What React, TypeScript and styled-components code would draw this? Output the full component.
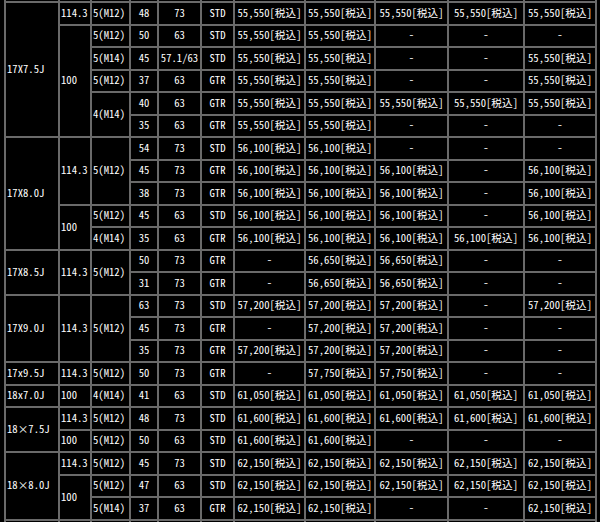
import React from 'react';
import styled, { createGlobalStyle } from 'styled-components';

const GlobalStyle = createGlobalStyle`
  html, body {
    margin: 0;
    padding: 0;
    background: #000;
    overflow: hidden;
  }
`;

const LINE = '#6a6a6a';

const Viewport = styled.div`
  height: 522px;
  overflow: hidden;
  padding-left: 4px;
  background: #000;
`;

const PriceGrid = styled.div`
  display: grid;
  grid-template-columns: 54px 32px 39px 28px 43px 33px 71px 70px 73px 76px 72px;
  grid-auto-rows: 22.5px;
  width: max-content;
  margin-top: -21.5px;
  border: 1px solid ${LINE};
  background: #000;
  color: #fff;
  font-family: "Noto Sans Mono CJK JP", "Noto Sans CJK JP", "DejaVu Sans Mono", monospace;
  font-size: 10.67px;
`;

const Cell = styled.div<{ $span?: number; $align?: 'left' | 'center' }>`
  grid-row: span ${(p) => p.$span ?? 1};
  box-sizing: border-box;
  border: 1px solid ${LINE};
  display: flex;
  align-items: center;
  justify-content: ${(p) => (p.$align === 'left' ? 'flex-start' : 'center')};
  padding: 0 1px;
  white-space: nowrap;
  line-height: 1;
`;

type C = { t: string; s?: number; l?: boolean };

const tax = (v: string) => `${v}[税込]`;
const D = '-';
const L = (t: string, s?: number): C => ({ t, s, l: true });
const prices = (v: string, mask: string): C[] =>
  mask.split('').map((m) => ({ t: m === '1' ? tax(v) : D }));
const spec = (a: string, b: string, c: string): C[] => [{ t: a }, { t: b }, { t: c }];
/* a row scrolled past the edge of the view: only its rules show */
const edgeRow = (): C[] => Array.from({ length: 11 }, () => ({ t: '' }));

const rows: C[][] = [
  edgeRow(),

  [L('17X7.5J', 6), L('114.3'), L('5(M12)'), ...spec('48', '73', 'STD'), ...prices('55,550', '11111')],
  [L('100', 5), L('5(M12)'), ...spec('50', '63', 'STD'), ...prices('55,550', '11000')],
  [L('5(M14)'), ...spec('45', '57.1/63', 'STD'), ...prices('55,550', '11001')],
  [L('5(M12)'), ...spec('37', '63', 'GTR'), ...prices('55,550', '11001')],
  [L('4(M14)', 2), ...spec('40', '63', 'GTR'), ...prices('55,550', '11111')],
  [...spec('35', '63', 'GTR'), ...prices('55,550', '11000')],

  [L('17X8.0J', 5), L('114.3', 3), L('5(M12)', 3), ...spec('54', '73', 'STD'), ...prices('56,100', '11000')],
  [...spec('45', '73', 'GTR'), ...prices('56,100', '11101')],
  [...spec('38', '73', 'GTR'), ...prices('56,100', '11101')],
  [L('100', 2), L('5(M12)'), ...spec('45', '63', 'STD'), ...prices('56,100', '11101')],
  [L('4(M14)'), ...spec('35', '63', 'GTR'), ...prices('56,100', '11111')],

  [L('17X8.5J', 2), L('114.3', 2), L('5(M12)', 2), ...spec('50', '73', 'GTR'), ...prices('56,650', '01100')],
  [...spec('31', '73', 'GTR'), ...prices('56,650', '01100')],

  [L('17X9.0J', 3), L('114.3', 3), L('5(M12)', 3), ...spec('63', '73', 'STD'), ...prices('57,200', '11101')],
  [...spec('45', '73', 'GTR'), ...prices('57,200', '01100')],
  [...spec('35', '73', 'GTR'), ...prices('57,200', '11100')],

  [L('17x9.5J'), L('114.3'), L('5(M12)'), ...spec('50', '73', 'GTR'), ...prices('57,750', '01100')],
  [L('18x7.0J'), L('100'), L('4(M14)'), ...spec('41', '63', 'STD'), ...prices('61,050', '11111')],

  [L('18×7.5J', 2), L('114.3'), L('5(M12)'), ...spec('48', '73', 'STD'), ...prices('61,600', '11111')],
  [L('100'), L('5(M12)'), ...spec('50', '63', 'STD'), ...prices('61,600', '11000')],

  [L('18×8.0J', 3), L('114.3'), L('5(M12)'), ...spec('45', '73', 'STD'), ...prices('62,150', '11111')],
  [L('100', 2), L('5(M12)'), ...spec('47', '63', 'STD'), ...prices('62,150', '11111')],
  [L('5(M14)'), ...spec('37', '63', 'GTR'), ...prices('62,150', '11001')],

  edgeRow(),
];

export default function App() {
  return (
    <>
      <GlobalStyle />
      <Viewport>
        <PriceGrid>
          {rows.flatMap((row, ri) =>
            row.map((c, ci) => (
              <Cell key={`${ri}-${ci}`} $span={c.s} $align={c.l ? 'left' : 'center'}>
                {c.t}
              </Cell>
            ))
          )}
        </PriceGrid>
      </Viewport>
    </>
  );
}
